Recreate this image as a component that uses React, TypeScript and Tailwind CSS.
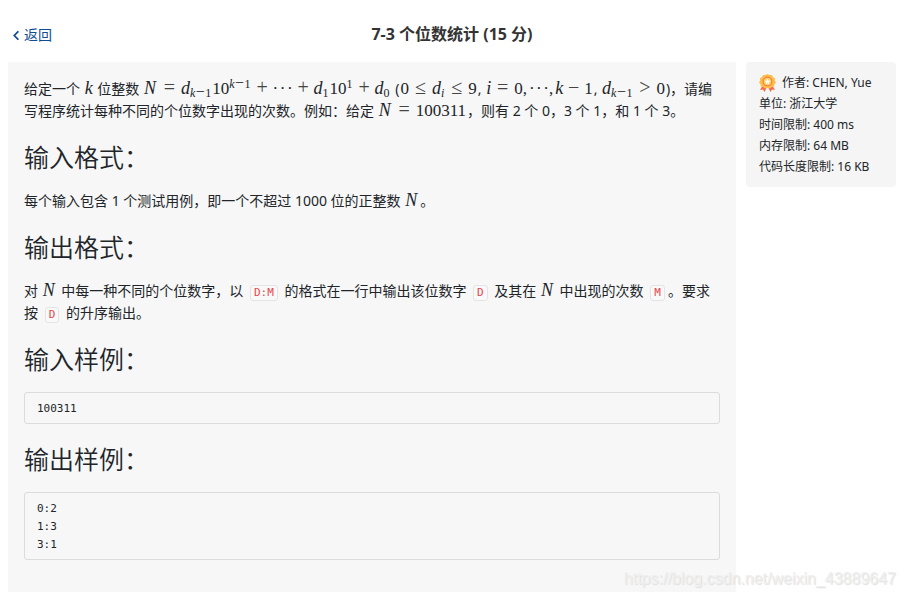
import type { ReactNode } from 'react';
import { FaChevronLeft } from 'react-icons/fa';

interface ChildrenProps {
    children: ReactNode;
}

function Formula({ children }: ChildrenProps) {
    return (
        <span className="mx-px whitespace-nowrap font-['Liberation_Serif',serif] text-[17px] leading-none">{children}</span>
    );
}

function Var({ children }: ChildrenProps) {
    return <i className="text-lg leading-none">{children}</i>;
}

function BigN() {
    return <i className="inline-block w-[14px] text-lg leading-none">N</i>;
}

// relation: = ≤ >
function Rel({ children }: ChildrenProps) {
    return <span className="mx-[5px] inline-block w-[13px] text-center text-xl leading-[0] text-[#444]">{children}</span>;
}

// binary operator: + −
function Bin({ children }: ChildrenProps) {
    return <span className="mx-1 inline-block w-[13px] text-center text-xl leading-[0] text-[#444]">{children}</span>;
}

function Comma() {
    return <span className="mr-[2px]">,</span>;
}

function Dots() {
    return (
        <span className="inline-flex w-[20px] justify-between leading-none">
            <span>·</span>
            <span>·</span>
            <span>·</span>
        </span>
    );
}

function KMinusOne() {
    return (
        <>
            <i>k</i>
            <span className="inline-block w-[10px] text-center text-base leading-[0]">−</span>1
        </>
    );
}

function Sub({ children }: ChildrenProps) {
    return <sub className="mr-px text-xs leading-[0]">{children}</sub>;
}

function Sup({ children }: ChildrenProps) {
    return <sup className="mr-px text-xs leading-[0]">{children}</sup>;
}

function Code({ children }: ChildrenProps) {
    return (
        <code className="mx-[3px] inline-block rounded-[3px] border border-[#e4e4e4] bg-[#f9f9f9] px-[3px] font-['DejaVu_Sans_Mono',monospace] text-[11px] leading-[14px] text-[#e5484d]">
            {children}
        </code>
    );
}

function SectionTitle({ children }: ChildrenProps) {
    return <h2 className="mt-5 mb-[18px] text-[25px] leading-[30px] font-[350]">{children}</h2>;
}

function Sample({ children }: ChildrenProps) {
    return (
        <pre className="rounded-[3px] border border-[#dcdcdc] px-3 pt-[7px] pb-[5px] font-['DejaVu_Sans_Mono',monospace] text-[11px] leading-[18px]">
            {children}
        </pre>
    );
}

function MedalIcon() {
    return (
        <svg viewBox="0 0 32 36" className="mr-[6px] inline-block h-[18px] w-[17px]" aria-hidden="true">
            <path d="M7 22 1 32l6-1 3 5 5-10zM25 22l6 10-6-1-3 5-5-10z" fill="#f4694c" />
            <path
                d="M16 0l4 2.200 4.600-.2 2.200 4L31 8.500l-.2 4.500L33 17l-3 3.500-.8 4.500-4.500 1L21 29l-5-1.500L11 29l-3.700-3-4.500-1-.8-4.500L-1 17l2.200-4L1 8.500 5.200 6l2.200-4 4.600.2z"
                fill="#fdbf45"
            />
            <circle cx="16" cy="15" r="10" fill="#f57f4c" />
            <circle cx="16" cy="15" r="7.500" fill="#ffcf66" />
            <path d="M16 9l1.900 4 4.300.5-3.200 3 .9 4.400-3.900-2.200-3.900 2.200.9-4.400-3.200-3 4.300-.5z" fill="#fffbe9" />
        </svg>
    );
}

const limits = ['单位: 浙江大学', '时间限制: 400 ms', '内存限制: 64 MB', '代码长度限制: 16 KB'];

export default function App() {
    return (
        <div className="relative bg-white pr-[9px] pb-[6px] pl-2 font-['Noto_Sans','Noto_Sans_CJK_SC',sans-serif] text-sm leading-[22px] text-[#212529]">
            <header className="grid grid-cols-[1fr_auto_1fr] items-center pt-[22px] pb-4">
                <a href="#" className="flex items-center gap-1 pt-[2px] pl-1 text-[#0f4c96]">
                    <FaChevronLeft className="h-[11px] w-2" />
                    返回
                </a>
                <h1 className="text-base leading-6 font-bold text-[#333]">7-3 个位数统计 (15 分)</h1>
            </header>

            <div className="flex items-start gap-[10px]">
                <main className="min-w-0 flex-1 bg-[#f7f7f7] px-4 pt-4 pb-8">
                    <p>
                        给定一个 <Formula><Var>k</Var></Formula> 位整数{' '}
                        <Formula>
                            <BigN /><Rel>=</Rel><Var>d</Var><Sub><KMinusOne /></Sub>10<Sup><KMinusOne /></Sup>
                            <Bin>+</Bin><Dots /><Bin>+</Bin>
                            <Var>d</Var><Sub>1</Sub>10<Sup>1</Sup><Bin>+</Bin><Var>d</Var><Sub>0</Sub>
                        </Formula>{' '}
                        (<Formula>0<Rel>≤</Rel><Var>d</Var><Sub><i>i</i></Sub><Rel>≤</Rel>9</Formula>,{' '}
                        <Formula>
                            <Var>i</Var><Rel>=</Rel>0<Comma /><Dots /><Comma /><Var>k</Var><Bin>−</Bin>1
                        </Formula>,{' '}
                        <Formula><Var>d</Var><Sub><KMinusOne /></Sub><Rel>&gt;</Rel>0</Formula>)，请编写程序统计每种不同的个位数字出现的次数。例如：给定{' '}
                        <Formula><BigN /><Rel>=</Rel>100311</Formula>，则有 2 个 0，3 个 1，和 1 个 3。
                    </p>

                    <SectionTitle>输入格式：</SectionTitle>
                    <p>
                        每个输入包含 1 个测试用例，即一个不超过 1000 位的正整数 <Formula><BigN /></Formula>。
                    </p>

                    <SectionTitle>输出格式：</SectionTitle>
                    <p>
                        对 <Formula><BigN /></Formula> 中每一种不同的个位数字，以 <Code>D:M</Code> 的格式在一行中输出该位数字 <Code>D</Code> 及其在{' '}
                        <Formula><BigN /></Formula> 中出现的次数 <Code>M</Code>。要求按 <Code>D</Code> 的升序输出。
                    </p>

                    <SectionTitle>输入样例：</SectionTitle>
                    <Sample>100311</Sample>

                    <SectionTitle>输出样例：</SectionTitle>
                    <Sample>{'0:2\n1:3\n3:1'}</Sample>
                </main>

                <aside className="w-[150px] shrink-0 rounded-[4px] bg-[#f5f5f5] px-[13px] py-[10px] text-xs leading-[21px]">
                    <div className="flex items-center">
                        <MedalIcon />
                        作者: CHEN, Yue
                    </div>
                    {limits.map((limit) => (
                        <div key={limit}>{limit}</div>
                    ))}
                </aside>
            </div>

            <div className="absolute right-[9px] bottom-[7px] font-['Liberation_Sans',sans-serif] text-base text-[#efefef] [text-shadow:1px_1px_1px_#dedede]">
                https://blog.csdn.net/weixin_43889647
            </div>
        </div>
    );
}
